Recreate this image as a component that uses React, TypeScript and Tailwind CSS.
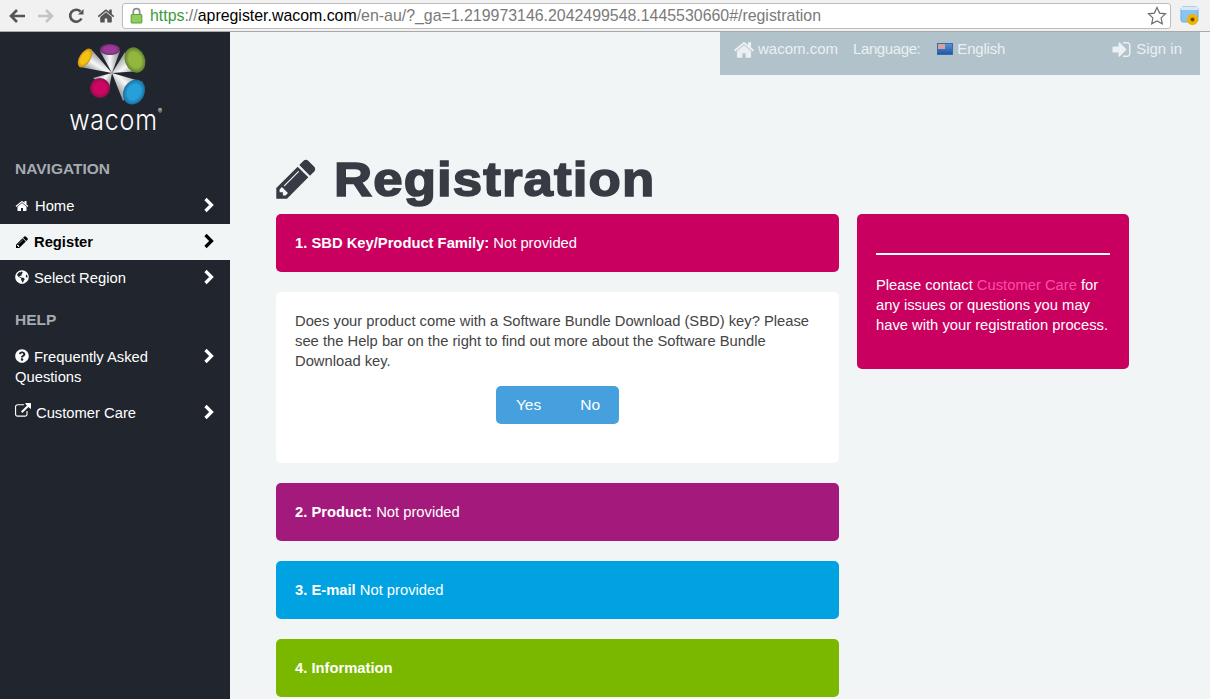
import { ReactNode } from 'react';
import { FaQuestionCircle, FaGlobeAmericas } from 'react-icons/fa';

const PENCIL = 'M491 1536l91-91-235-235-91 91v107h128v128h107zm523-928q0-22-22-22-10 0-17 7l-542 542q-7 7-7 17 0 22 22 22 10 0 17-7l542-542q7-7 7-17zm-54-192l416 416-832 832H128v-416zm683 96q0 53-37 90l-166 166-416-416 166-165q36-38 90-38 53 0 91 38l235 234q37 39 37 91z';
const HOME = 'M1472 992v480q0 26-19 45t-45 19h-384v-384H768v384H384q-26 0-45-19t-19-45V992q0-1 .5-3t.5-3l575-474 575 474q1 2 1 6zm223-69l-62 74q-8 9-21 11h-3q-13 0-21-7L896 424l-692 577q-12 8-24 7-13-2-21-11l-62-74q-8-10-7-23.500t11-21.500l719-599q32-26 76-26t76 26l244 204V288q0-14 9-23t23-9h192q14 0 23 9t9 23v408l219 182q10 8 11 21.500t-7 23.500z';
const SIGN_IN = 'M1312 896q0 26-19 45l-544 544q-19 19-45 19t-45-19-19-45v-288H192q-26 0-45-19t-19-45V704q0-26 19-45t45-19h448V352q0-26 19-45t45-19 45 19l544 544q19 19 19 45zm352-352v704q0 119-84.500 203.500T1376 1536h-320q-13 0-22.500-9.500T1024 1504q0-4-1-20t-.5-26.500 3-23.500 10-19.500 20.500-6.500h320q66 0 113-47t47-113V544q0-66-47-113t-113-47h-312l-11.500-1-11.500-3-8-5.500-7-9-2-13.500q0-4-1-20t-.5-26.500 3-23.500 10-19.500 20.500-6.500h320q119 0 203.500 84.500T1664 544z';
const EXTERNAL = 'M1408 928v320q0 119-84.500 203.500T1120 1536H288q-119 0-203.500-84.500T0 1248V416q0-119 84.500-203.500T288 128h704q14 0 23 9t9 23v64q0 14-9 23t-23 9H288q-66 0-113 47t-47 113v832q0 66 47 113t113 47h832q66 0 113-47t47-113V928q0-14 9-23t23-9h64q14 0 23 9t9 23zm384-864v512q0 26-19 45t-45 19-45-19l-176-176-652 652q-10 10-23 10t-23-10L695 983q-10-10-10-23t10-23l652-652-176-176q-19-19-19-45t19-45 45-19h512q26 0 45 19t19 45z';

const Fa = ({ d, className }: { d: string; className: string }) => (
  <svg viewBox="0 0 1792 1792" fill="currentColor" className={className}>
    <path d={d} />
  </svg>
);

const Chevron = () => (
  <svg viewBox="0 0 12 16" className="absolute right-[15px] top-[9px] w-3 h-4" fill="none" stroke="currentColor" strokeWidth="3.2">
    <path d="M2.500 2l6 6-6 6" />
  </svg>
);

// one silver cone of the logo, shaded across its width
const Cone = ({ id, a, b }: { id: string; a: number[]; b: number[] }) => (
  <>
    <linearGradient id={id} gradientUnits="userSpaceOnUse" x1={a[0]} y1={a[1]} x2={b[0]} y2={b[1]}>
      <stop offset="0" stopColor="#8f9194" />
      <stop offset="0.5" stopColor="#f8f8f8" />
      <stop offset="1" stopColor="#85878b" />
    </linearGradient>
    <path d={`M52 33L${a[0]} ${a[1]}L${b[0]} ${b[1]}Z`} fill={`url(#${id})`} />
  </>
);

// coloured cap of a cone, darker towards the rim
const Cap = ({ id, from, to, cx, cy, rx, ry, rotate }: { id: string; from: string; to: string; cx: number; cy: number; rx: number; ry: number; rotate: number }) => (
  <>
    <radialGradient id={id}>
      <stop offset="0.6" stopColor={from} />
      <stop offset="1" stopColor={to} />
    </radialGradient>
    <ellipse cx={cx} cy={cy} rx={rx} ry={ry} transform={`rotate(${rotate} ${cx} ${cy})`} fill={`url(#${id})`} />
  </>
);

const Logo = () => (
  <svg viewBox="0 0 110 70" className="w-[110px] h-[70px]">
    <Cone id="c1" a={[31, 9]} b={[20, 27]} />
    <Cone id="c2" a={[40, 11]} b={[60, 11]} />
    <Cone id="c3" a={[65, 12]} b={[80, 31]} />
    <Cone id="c4" a={[33, 38]} b={[49, 49]} />
    <Cone id="c5" a={[83, 42]} b={[63, 61]} />
    <Cap id="k1" from="#f4c414" to="#c88f10" cx={25} cy={18} rx={5.5} ry={10.5} rotate={32} />
    <Cap id="k2" from="#9a3a96" to="#6f2a70" cx={50} cy={9.5} rx={10} ry={5.5} rotate={0} />
    <Cap id="k3" from="#93b63f" to="#5f7f2e" cx={75} cy={20} rx={10} ry={13} rotate={-22} />
    <Cap id="k4" from="#cc0662" to="#8c1048" cx={40} cy={48} rx={10} ry={10} rotate={0} />
    <Cap id="k5" from="#279fd8" to="#1a6f9e" cx={74} cy={52} rx={10.5} ry={13} rotate={28} />
  </svg>
);

const NavItem = ({ icon, label, active }: { icon: ReactNode; label: ReactNode; active?: boolean }) => (
  <a className={`${active ? 'bg-[#f2f5f6] text-black font-bold' : 'text-white'} relative block px-[15px] py-[8px] text-[14.75px] leading-[20px]`}>
    {icon}
    {label}
    <Chevron />
  </a>
);

const StepCard = ({ color, title, text }: { color: string; title: string; text?: string }) => (
  <div className={`${color} rounded-[5px] h-[58px] px-[19px] flex items-center text-white text-[14.75px]`}>
    <p>
      <b>{title}</b>
      {text ? ` ${text}` : ''}
    </p>
  </div>
);

export default function App() {
  return (
    <div className="w-[1210px] h-[699px] overflow-hidden flex flex-col bg-[#f2f5f6] font-['Liberation_Sans',Arial,sans-serif]">
      {/* browser toolbar */}
      <div className="h-[32px] shrink-0 bg-[#f1f1f1] border-b border-[#a9a9a9] flex items-center pl-[8px] pr-[10px]">
        <svg viewBox="0 0 18 16" className="w-[18px] h-4 text-[#555]" fill="none" stroke="currentColor" strokeWidth="2.600">
          <path d="M17 8H3M9 2L3 8l6 6" />
        </svg>
        <svg viewBox="0 0 18 16" className="ml-[11px] w-[18px] h-4 text-[#c4c4c4]" fill="none" stroke="currentColor" strokeWidth="2.600">
          <path d="M1 8h14M9 2l6 6-6 6" />
        </svg>
        <svg viewBox="0 0 16 16" className="ml-[13px] w-4 h-4 text-[#555]" fill="none" stroke="currentColor" strokeWidth="2.600">
          <path d="M13.500 10.500A6 6 0 1 1 12.500 3.500" />
          <path d="M10 6.500h5.500V1z" fill="currentColor" stroke="none" />
        </svg>
        <Fa d={HOME} className="ml-[13px] w-[18px] h-[18px] text-[#555]" />
        <div className="ml-[7px] flex-1 h-[26px] bg-white border border-[#bdbdbd] rounded-[3px] flex items-center pl-[7px] pr-[3px] text-[15.9px]">
          <svg viewBox="0 0 12 16" className="w-[13px] h-[17px] shrink-0">
            <path d="M3 7V4.500a3 3 0 0 1 6 0V7" fill="none" stroke="#8c8c8c" strokeWidth="1.600" />
            <rect x="1" y="7" width="10" height="8" rx="1" fill="#8fce5c" stroke="#5f9e34" />
          </svg>
          <span className="ml-[7px] whitespace-nowrap flex-1">
            <span className="text-[#3c9a3c]">https</span>
            <span className="text-[#7a7a7a]">://</span>
            <span className="text-black">apregister.wacom.com</span>
            <span className="text-[#7a7a7a]">/en-au/?_ga=1.219973146.2042499548.1445530660#/registration</span>
          </span>
          <svg viewBox="0 0 20 20" className="w-[20px] h-[20px] shrink-0" fill="#fff" stroke="#6e6e6e" strokeWidth="1.200">
            <path d="M10 1.500l2.600 5.600 6 .7-4.500 4.100 1.200 6L10 15l-5.300 2.900 1.200-6L1.400 7.800l6-.7z" />
          </svg>
        </div>
        <svg viewBox="0 0 20 20" className="ml-[9px] w-[20px] h-[20px] shrink-0">
          <rect x="1" y="1" width="17" height="15" rx="2" fill="#8cc4ee" stroke="#6ea9db" />
          <rect x="1" y="1" width="17" height="3" fill="#d5e9f9" />
          <circle cx="12.500" cy="13.500" r="5.500" fill="#f0b400" />
          <circle cx="12.500" cy="13.500" r="2" fill="#6b4a00" />
        </svg>
      </div>

      <div className="flex flex-1 min-h-0">
        {/* sidebar */}
        <aside className="w-[230px] shrink-0 bg-[#21252e]">
          <div className="h-[125px] flex flex-col items-center pt-[8px]">
            <Logo />
            <span className="relative -mt-[5px] -ml-[3px] text-white text-[25px] leading-[30px] tracking-[0.8px] scale-y-[1.15] font-['Inter',sans-serif] font-light">
              wacom
              <span className="absolute -right-[5px] top-[5px] text-[6px] leading-none">®</span>
            </span>
          </div>
          <h3 className="px-[15px] text-[#a5abb2] font-bold text-[15.5px] leading-[24px]">NAVIGATION</h3>
          <nav className="mt-[7px]">
            <NavItem icon={<Fa d={HOME} className="inline-block align-[-2px] w-[14px] h-[14px] mr-[6px]" />} label="Home" />
            <NavItem active icon={<Fa d={PENCIL} className="inline-block align-[-2px] w-[14px] h-[14px] mr-[5px]" />} label="Register" />
            <NavItem icon={<FaGlobeAmericas className="inline-block align-[-1px] w-[14px] h-[14px] mr-[5px]" />} label="Select Region" />
          </nav>
          <h3 className="mt-[12px] px-[15px] text-[#a5abb2] font-bold text-[15.5px] leading-[24px]">HELP</h3>
          <nav className="mt-[7px]">
            <NavItem icon={<FaQuestionCircle className="inline-block align-[-1px] w-[14px] h-[14px] mr-[5px]" />} label={<>Frequently Asked<br />Questions</>} />
            <NavItem icon={<Fa d={EXTERNAL} className="inline-block align-[-1px] w-[16px] h-[16px] mr-[5px]" />} label="Customer Care" />
          </nav>
        </aside>

        {/* main */}
        <main className="flex-1 min-w-0 pl-[46px]">
          <div className="flex justify-end pr-[10px]">
            <div className="w-[480px] h-[43px] bg-[#b2c2ca] text-[#eaf0f3] text-[15px] flex items-start pt-[6px] pl-[13px] relative">
              <Fa d={HOME} className="w-[22px] h-[22px] mt-[1px] mr-[3px]" />
              <span>wacom.com</span>
              <span className="ml-[15px] tracking-[-0.4px]">Language:</span>
              <span className="ml-[17px] mt-[5px] w-4 h-[12px] bg-gradient-to-b from-[#5a8fd4] to-[#1d5aa8] border border-[#3a6aa8] relative">
                <span className="absolute left-0 top-0 w-[7px] h-[5px] bg-[#d9a0a0]" />
              </span>
              <span className="ml-1 tracking-[-0.2px]">English</span>
              <span className="absolute right-[18px] top-[6px] flex">
                <Fa d={SIGN_IN} className="w-[21px] h-[21px] mt-[1px] mr-1" />
                Sign in
              </span>
            </div>
          </div>

          <h1 className="mt-[75px] h-[62px] pb-[2px] flex items-center text-[#363b44] text-[48px] font-bold leading-[60px]">
            <Fa d={PENCIL} className="w-[46px] h-[46px] -ml-[3px] mr-[15px] -mt-[2px]" />
            <span className="inline-block origin-left scale-x-[1.1] tracking-[1px] [-webkit-text-stroke:1.6px_#363b44]">Registration</span>
          </h1>

          <div className="mt-[2px] flex gap-[18px] items-start">
            <div className="w-[563px] flex flex-col gap-[20px]">
              <StepCard color="bg-[#c90060]" title="1. SBD Key/Product Family:" text="Not provided" />
              <div className="bg-white rounded-[5px] h-[171px] px-[19px] pt-[19px] text-[#444] text-[14.75px] leading-[20px]">
                <p>
                  Does your product come with a Software Bundle Download (SBD) key? Please
                  see the Help bar on the right to find out more about the Software Bundle
                  Download key.
                </p>
                <div className="mt-[15px] flex justify-center">
                  <div className="flex h-[38px] bg-[#45a0dd] rounded-[5px] text-white text-[15.5px] items-center">
                    <button className="px-[20px]">Yes</button>
                    <button className="pl-[19px] pr-[19px]">No</button>
                  </div>
                </div>
              </div>
              <StepCard color="bg-[#a31a7c]" title="2. Product:" text="Not provided" />
              <StepCard color="bg-[#00a2e1]" title="3. E-mail" text="Not provided" />
              <StepCard color="bg-[#7ab800]" title="4. Information" />
            </div>

            <div className="w-[272px] h-[155px] bg-[#c90060] rounded-[5px] px-[19px] pt-[39px] text-white text-[14.75px] leading-[20px]">
              <hr className="border-t-2 border-white mb-[20px] w-[234px]" />
              <p>
                Please contact <a className="text-[#ff4da6]">Customer Care</a> for any issues or questions you may
                have with your registration process.
              </p>
            </div>
          </div>
        </main>
      </div>
    </div>
  );
}
